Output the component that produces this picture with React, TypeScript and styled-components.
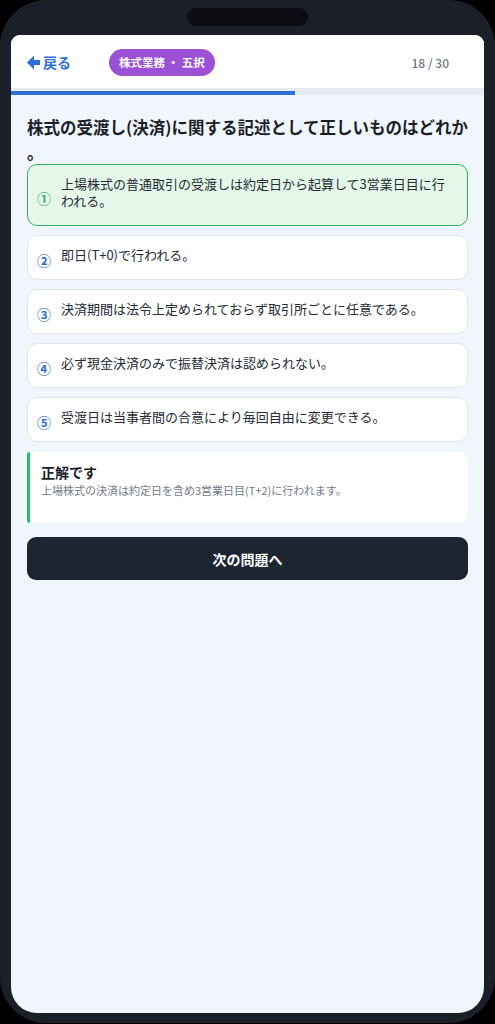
import React from "react";
import styled, { createGlobalStyle } from "styled-components";

const GlobalStyle = createGlobalStyle`
  html, body {
    margin: 0;
    padding: 0;
    background: #000;
  }
  body {
    font-family: "Noto Sans CJK JP", "Noto Sans", sans-serif;
    -webkit-font-smoothing: antialiased;
  }
  * { box-sizing: border-box; }
`;

const Frame = styled.div`
  width: 495px;
  height: 1023px;
  background: #1b1f27;
  border-radius: 46px;
  padding: 8px 11px 10px;
  display: flex;
  flex-direction: column;
  align-items: center;
`;

const Notch = styled.div`
  width: 121px;
  height: 18px;
  border-radius: 9px;
  background: #0b0d12;
  margin-bottom: 9px;
  flex-shrink: 0;
`;

const Screen = styled.div`
  width: 473px;
  flex: 1;
  background: #f1f5fc;
  border-radius: 9px 9px 26px 26px;
  overflow: hidden;
  display: flex;
  flex-direction: column;
`;

const Header = styled.header`
  height: 53px;
  background: #fff;
  display: flex;
  align-items: center;
  padding: 1px 16px 0;
`;

const BackButton = styled.button`
  display: flex;
  align-items: center;
  gap: 3px;
  border: 0;
  background: none;
  padding: 0;
  color: #2d6fd6;
  font-family: inherit;
  font-size: 14px;
  font-weight: 700;
  cursor: pointer;
`;

const Pill = styled.span`
  margin-left: 38px;
  height: 27px;
  padding: 0 10px;
  border-radius: 14px;
  background: #9b50d5;
  color: #fff;
  font-size: 11.5px;
  font-weight: 700;
  display: flex;
  align-items: center;
  white-space: pre;
`;

const Counter = styled.span`
  margin-left: auto;
  margin-right: 19px;
  color: #6b7280;
  font-size: 12px;
  font-weight: 500;
`;

const Track = styled.div`
  height: 7px;
  background: #e6eaf1;
  padding-top: 3px;
`;

const Fill = styled.div`
  height: 4px;
  background: #2d6fd6;
`;

const Content = styled.main`
  padding: 20px 16px;
  display: flex;
  flex-direction: column;
`;

const Question = styled.h1`
  margin: 0;
  font-size: 16.5px;
  line-height: 24.5px;
  font-weight: 700;
  color: #1a1f2b;
  line-break: anywhere;
`;

const Options = styled.div`
  display: flex;
  flex-direction: column;
  gap: 9px;
`;

const Option = styled.div<{ $correct?: boolean }>`
  display: flex;
  align-items: center;
  gap: 10px;
  padding: 13px 12px 13px 9px;
  border-radius: 10px;
  border: ${(p) => (p.$correct ? "1.5px solid #33b45a" : "1px solid #dfe5ee")};
  background: ${(p) => (p.$correct ? "#e4f7e9" : "#fff")};
`;

const Num = styled.span<{ $correct?: boolean }>`
  width: 14px;
  flex-shrink: 0;
  margin: 3px 0 -3px;
  font-size: 14px;
  font-weight: 700;
  line-height: 17px;
  color: ${(p) => (p.$correct ? "#36b55c" : "#2d6fd6")};
`;

const OptionText = styled.span`
  font-size: 13px;
  line-height: 17px;
  margin: -3px 0 3px;
  color: #262b35;
`;

const Feedback = styled.div`
  margin-top: 10px;
  background: #fff;
  border-left: 3px solid #22c05a;
  border-radius: 3px 9px 9px 3px;
  padding: 10px 14px 24px 11px;
`;

const FeedbackTitle = styled.div`
  font-size: 14px;
  line-height: 20px;
  font-weight: 700;
  color: #1a1f2b;
`;

const FeedbackText = styled.div`
  font-size: 11px;
  line-height: 17px;
  color: #747b87;
`;

const NextButton = styled.button`
  margin-top: 14px;
  height: 43px;
  border: 0;
  border-radius: 9px;
  background: #1e2532;
  color: #fff;
  font-family: inherit;
  font-size: 14px;
  font-weight: 700;
  cursor: pointer;
`;

const ArrowIcon = () => (
  <svg width="13" height="15" viewBox="0 0 13 15" aria-hidden="true">
    <path d="M0 7.5 L7 0.5 V5 H13 V10 H7 V14.5 Z" fill="#2d6fd6" />
  </svg>
);

const options = [
  "上場株式の普通取引の受渡しは約定日から起算して3営業日目に行われる。",
  "即日(T+0)で行われる。",
  "決済期間は法令上定められておらず取引所ごとに任意である。",
  "必ず現金決済のみで振替決済は認められない。",
  "受渡日は当事者間の合意により毎回自由に変更できる。",
];
const marks = ["①", "②", "③", "④", "⑤"];

export default function App() {
  const current = 18;
  const total = 30;
  return (
    <>
      <GlobalStyle />
      <Frame>
        <Notch />
        <Screen>
          <Header>
            <BackButton>
              <ArrowIcon />
              戻る
            </BackButton>
            <Pill>{"株式業務 ・ 五択"}</Pill>
            <Counter>
              {current} / {total}
            </Counter>
          </Header>
          <Track>
            <Fill style={{ width: `${(current / total) * 100}%` }} />
          </Track>
          <Content>
            <Question>株式の受渡し(決済)に関する記述として正しいものはどれか。</Question>
            <Options>
              {options.map((o, i) => (
                <Option key={i} $correct={i === 0}>
                  <Num $correct={i === 0}>{marks[i]}</Num>
                  <OptionText>{o}</OptionText>
                </Option>
              ))}
            </Options>
            <Feedback>
              <FeedbackTitle>正解です</FeedbackTitle>
              <FeedbackText>上場株式の決済は約定日を含め3営業日目(T+2)に行われます。</FeedbackText>
            </Feedback>
            <NextButton>次の問題へ</NextButton>
          </Content>
        </Screen>
      </Frame>
    </>
  );
}
